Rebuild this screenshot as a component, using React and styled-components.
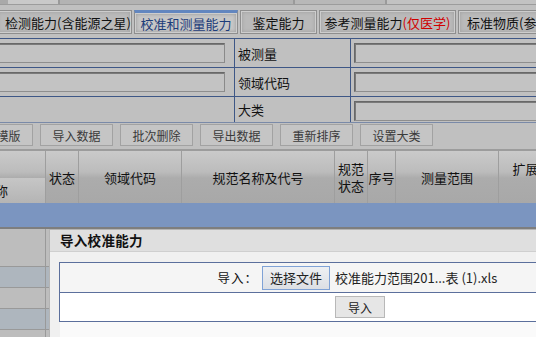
import styled, { createGlobalStyle } from "styled-components"

const GlobalStyle = createGlobalStyle`
    body {
        margin: 0;
        background: #c0c0c0;
        font-family: "Noto Sans CJK SC", "DejaVu Sans", sans-serif;
        overflow: hidden;
    }
`

const Page = styled.div`
    position: relative;
    width: 536px;
    height: 337px;
    overflow: hidden;
    background: #c0c0c0;
    color: #111;
`

const TopStrip = styled.div`
    display: flex;
    height: 5px;
    margin-bottom: 5px;
`

const StripCell = styled.div`
    flex: 0 0 ${p => p.$w}px;
    background: ${p => p.$bg};
    border-right: ${p => p.$edge ? "2px solid #9a9a9a" : "none"};
    border-bottom: 1px solid #9c9c9c;
    box-sizing: border-box;
`

const TabBar = styled.div`
    display: flex;
    gap: 2px;
    margin-left: -4px;
    height: 24px;
`

const Tab = styled.div`
    flex: 0 0 ${p => p.$w}px;
    box-sizing: border-box;
    height: 24px;
    display: flex;
    align-items: center;
    justify-content: ${p => p.$left ? "flex-start" : "center"};
    padding-left: ${p => p.$left ? "8px" : "0"};
    white-space: nowrap;
    overflow: hidden;
    font-size: 13px;
    border: 1px solid #8e8e8e;
    border-top: ${p => p.$active ? "3px solid #6286bf" : "1px solid #8e8e8e"};
    box-shadow: inset 0 0 0 1px #cdcdcd, inset 0 0 3px 2px #a9a9a9;
    background: ${p => p.$active ? "#c6c6c6" : "#bababa"};
    color: ${p => p.$active ? "#1d3d7a" : "#111"};
    span { color: #d00000; }
`

const FormGrid = styled.div`
    display: grid;
    grid-template-columns: 235px 116px 1fr;
    grid-template-rows: 29px 29px 25px;
    margin-top: 4px;
    border-top: 1px solid #3e5786;
    border-bottom: 1px solid #7a8aa8;
`

const FormCell = styled.div`
    box-sizing: border-box;
    border-bottom: ${p => p.$last ? "none" : "1px solid #3e5786"};
    border-right: ${p => p.$edge ? "1px solid #3e5786" : "none"};
    display: flex;
    align-items: ${p => p.$label ? "center" : "flex-start"};
    padding: ${p => p.$label ? "0 0 0 3px" : "4px 0 0 3px"};
    font-size: 13px;
`

const Field = styled.div`
    box-sizing: border-box;
    height: 20px;
    width: ${p => p.$w ? p.$w + "px" : "100%"};
    margin-left: ${p => p.$shift || 0}px;
    border: 1px solid #686868;
    border-right: ${p => p.$open ? "none" : "1px solid #8a8a8a"};
    border-bottom-color: #8e8e8e;
    background: #c3c3c3;
    box-shadow: inset 1px 1px 0 #7a7a7a;
`

const ButtonBar = styled.div`
    display: flex;
    gap: 7px;
    padding: 1px 0 1px 0;
    margin-left: -40px;
    height: 24px;
    border-bottom: 2px solid #9c9c9c;
`

const ToolButton = styled.div`
    flex: 0 0 73px;
    box-sizing: border-box;
    height: 22px;
    border: 1px solid #a2a2a2;
    background: #c5c5c5;
    display: flex;
    align-items: center;
    justify-content: center;
    font-size: 12px;
    color: #3a3a3a;
`

const cols = "46px 33px 103px 153px 33px 28px 103px 106px"

const HeadRow = styled.div`
    display: grid;
    grid-template-columns: ${cols};
    height: 52px;
    background: linear-gradient(#cacaca, #bcbcbc 40%, #acacac 52%, #a8a8a8);
`

const HeadCell = styled.div`
    border-right: 1px solid #9e9e9e;
    display: flex;
    align-items: center;
    justify-content: center;
    font-size: 13px;
    line-height: 17px;
    text-align: center;
    overflow: hidden;
`

const HeadText = styled.div`
    width: ${p => p.$w}px;
    word-break: ${p => p.$words ? "normal" : "break-all"};
`

const SplitHead = styled.div`
    border-right: 1px solid #9e9e9e;
    display: flex;
    flex-direction: column;
    justify-content: flex-end;
    overflow: hidden;
`

const SubHead = styled.div`
    height: 25px;
    background: linear-gradient(#c6c6c6, #b4b4b4);
    font-size: 13px;
    line-height: 26px;
    white-space: nowrap;
    text-indent: -18px;
`

const SelectedRow = styled.div`
    height: 24px;
    background: #7b95c0;
    border-bottom: 2px solid #7e7e7e;
`

const DataRow = styled.div`
    display: grid;
    grid-template-columns: ${cols};
    height: ${p => p.$h}px;
    box-sizing: border-box;
    border-bottom: 1px solid #999;
    background: ${p => p.$alt ? "#aeb6be" : "#bdbdbd"};
    div { border-right: 1px solid #999; }
`

const Dialog = styled.div`
    position: absolute;
    left: 49px;
    top: 229px;
    width: 520px;
    height: 120px;
    box-sizing: border-box;
    border: 1px solid #b4b4b4;
    background: #f0f0f0;
    display: flex;
    flex-direction: column;
`

const DialogTitle = styled.div`
    height: 21px;
    background: #dfdfdf;
    border-bottom: 1px solid #cfcfcf;
    padding-left: 10px;
    font-size: 13.5px;
    font-weight: bold;
    line-height: 21px;
    letter-spacing: 0.3px;
`

const DialogBody = styled.div`
    flex: 1;
    display: flex;
    flex-direction: column;
    padding: 10px 0 0 9px;
`

const ImportTable = styled.div`
    border: 1px solid #5b6f9c;
    border-right: none;
`

const ImportRow = styled.div`
    display: flex;
    align-items: center;
    height: ${p => p.$h}px;
    background: ${p => p.$white ? "#fff" : "#f5f5f5"};
    border-bottom: ${p => p.$white ? "none" : "1px solid #5b6f9c"};
`

const RowLabel = styled.div`
    width: 198px;
    text-align: right;
    font-size: 12.5px;
    letter-spacing: 1px;
    padding-right: 4px;
`

const FileButton = styled.div`
    box-sizing: border-box;
    height: 24px;
    width: 68px;
    border: 1px solid #7fa2d6;
    background: linear-gradient(#eef0f3, #dcdfe4);
    font-size: 13px;
    display: flex;
    align-items: center;
    justify-content: center;
    color: #222;
`

const FileName = styled.div`
    margin-left: 5px;
    font-size: 13px;
    font-family: "Noto Sans CJK SC", "Liberation Sans", sans-serif;
    color: #222;
    white-space: nowrap;
`

const SubmitButton = styled.div`
    box-sizing: border-box;
    margin-left: 275px;
    width: 50px;
    height: 22px;
    border: 1px solid #b8b8b8;
    background: #e6e6e6;
    font-size: 12px;
    display: flex;
    align-items: center;
    justify-content: center;
    color: #222;
`

const Blank = styled.div`
    flex: 1;
    background: #fafafa;
    margin-left: 1px;
`

const tabs = [
    { w: 136, label: "检测能力(含能源之星)", left: true },
    { w: 104, label: "校准和测量能力", active: true },
    { w: 77, label: "鉴定能力" },
    { w: 137, label: "参考测量能力", red: "(仅医学)" },
    { w: 120, label: "标准物质(参考物质)", left: true },
]

const tools = ["下载模版", "导入数据", "批次删除", "导出数据", "重新排序", "设置大类"]

const heads = [
    { label: "状态", w: 26 },
    { label: "领域代码", w: 52 },
    { label: "规范名称及代号", w: 91 },
    { label: "规范状态", w: 26 },
    { label: "序号", w: 26 },
    { label: "测量范围", w: 52 },
    { label: "扩展不确定度 (k=2)", w: 80, words: true },
]

const rows = [
    { h: 38 }, { h: 21, alt: true }, { h: 21 }, { h: 21, alt: true }, { h: 21 },
]

function App() {
    return (
        <Page>
            <GlobalStyle />
            <TopStrip>
                <StripCell $w={8} $bg="#a9a9a9" />
                <StripCell $w={52} $bg="#c9c9c9" $edge />
                <StripCell $w={235} $bg="#b3b3b3" $edge />
                <StripCell $w={92} $bg="#b8b8b8" $edge />
                <StripCell $w={149} $bg="#c2c2c2" />
            </TopStrip>
            <TabBar>
                {tabs.map(t => (
                    <Tab key={t.label} $w={t.w} $active={t.active} $left={t.left}>
                        {t.label}{t.red && <span>{t.red}</span>}
                    </Tab>
                ))}
            </TabBar>
            <FormGrid>
                <FormCell $edge><Field $w={228} $shift={-6} /></FormCell>
                <FormCell $edge $label>被测量</FormCell>
                <FormCell><Field $open /></FormCell>
                <FormCell $edge><Field $w={228} $shift={-6} /></FormCell>
                <FormCell $edge $label>领域代码</FormCell>
                <FormCell><Field $open /></FormCell>
                <FormCell $edge $last />
                <FormCell $edge $last $label>大类</FormCell>
                <FormCell $last><Field $open /></FormCell>
            </FormGrid>
            <ButtonBar>
                {tools.map(t => <ToolButton key={t}>{t}</ToolButton>)}
            </ButtonBar>
            <HeadRow>
                <SplitHead><SubHead>名称</SubHead></SplitHead>
                {heads.map(h => (
                    <HeadCell key={h.label}>
                        <HeadText $w={h.w} $words={h.words}>{h.label}</HeadText>
                    </HeadCell>
                ))}
            </HeadRow>
            <SelectedRow />
            {rows.map((r, i) => (
                <DataRow key={i} $h={r.h} $alt={r.alt}>
                    <div /><div /><div /><div /><div /><div /><div /><div />
                </DataRow>
            ))}
            <Dialog>
                <DialogTitle>导入校准能力</DialogTitle>
                <DialogBody>
                    <ImportTable>
                        <ImportRow $h={29}>
                            <RowLabel>导入：</RowLabel>
                            <FileButton>选择文件</FileButton>
                            <FileName>校准能力范围201...表 (1).xls</FileName>
                        </ImportRow>
                        <ImportRow $h={28} $white>
                            <SubmitButton>导入</SubmitButton>
                        </ImportRow>
                    </ImportTable>
                    <Blank />
                </DialogBody>
            </Dialog>
        </Page>
    )
}

export default App
